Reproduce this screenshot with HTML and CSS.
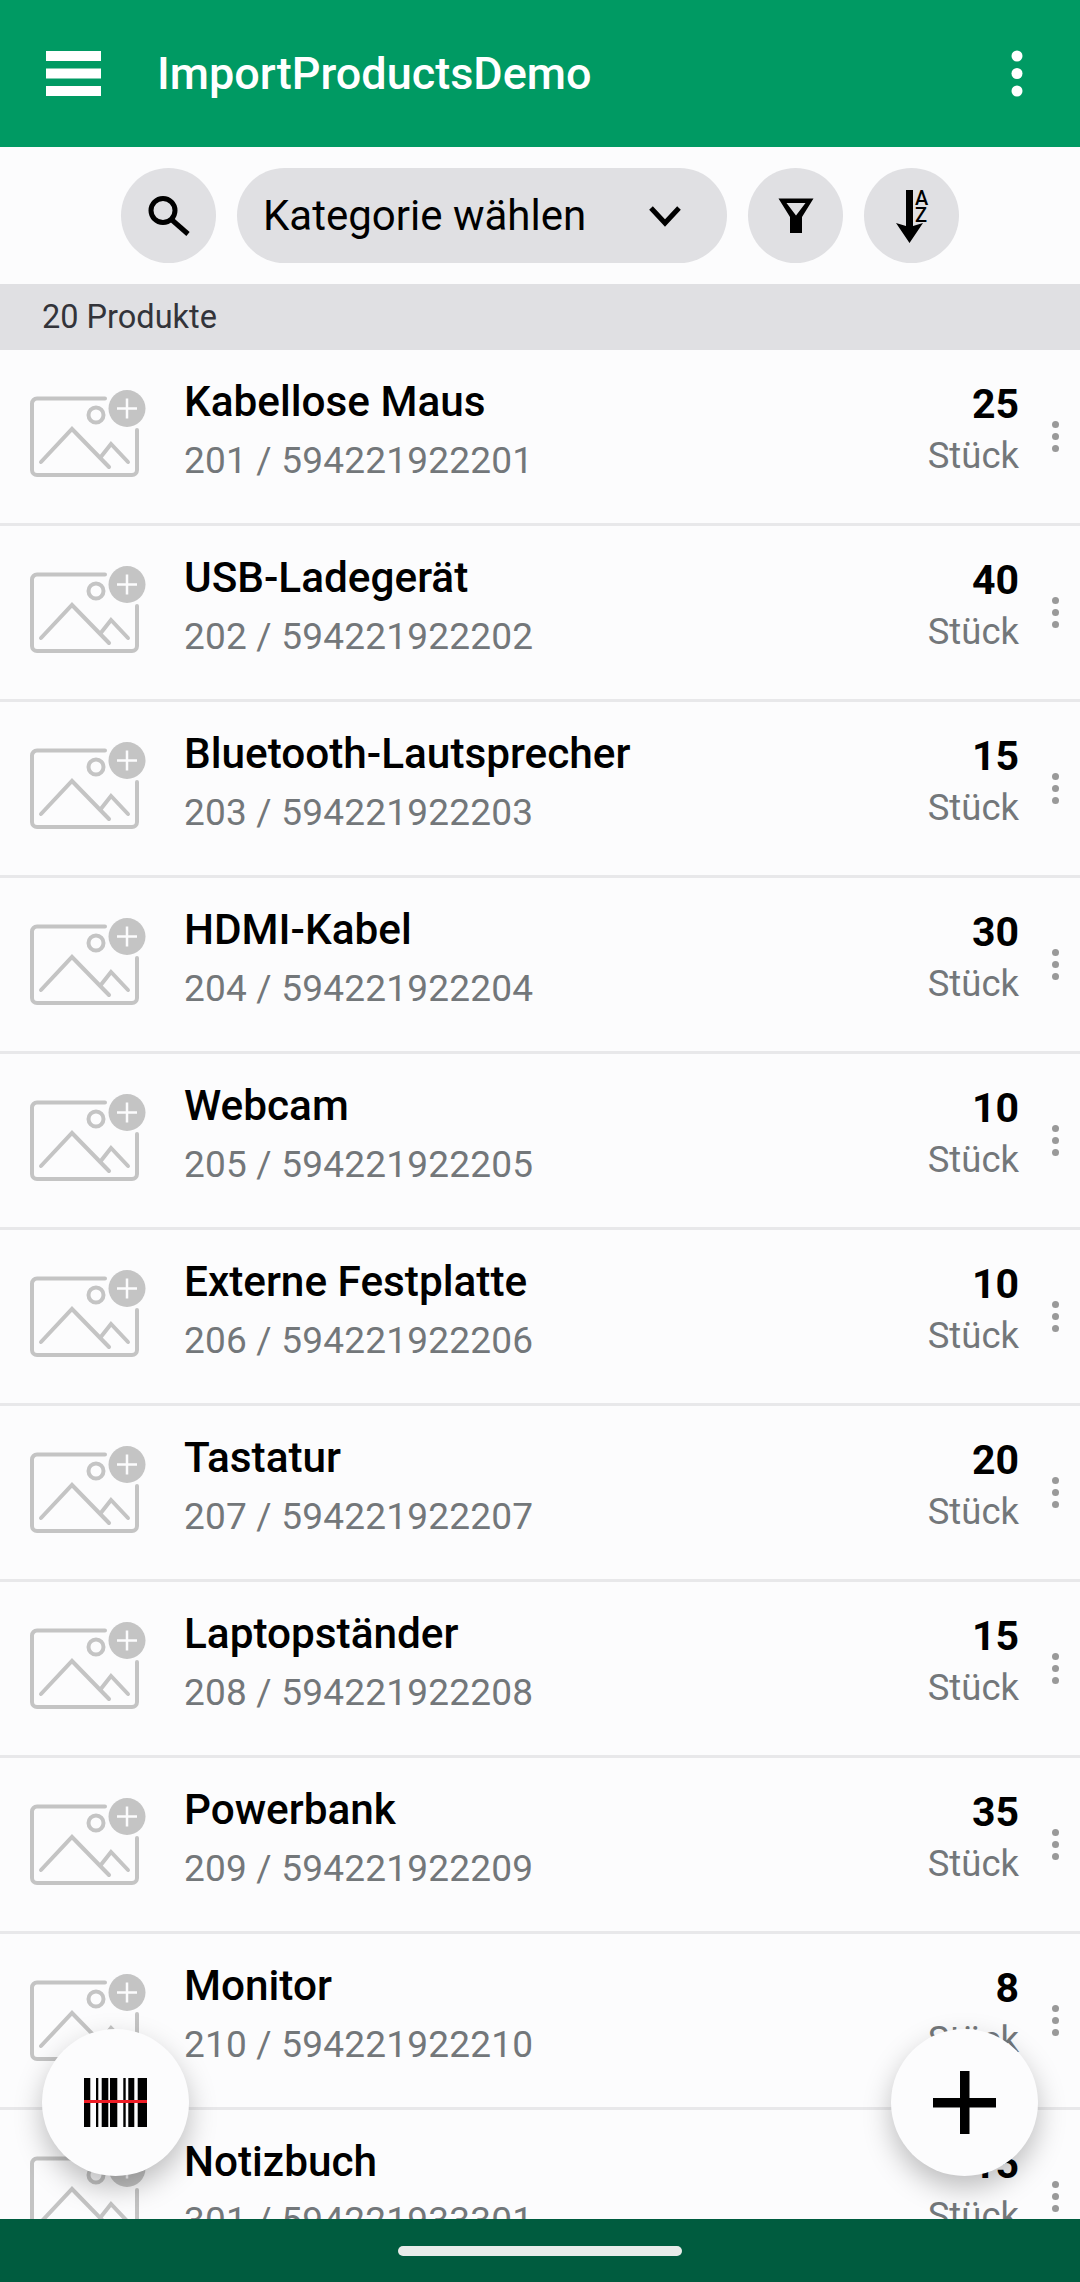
FILE: index.html
```html
<!DOCTYPE html>
<html lang="de">
<head>
    <meta charset="UTF-8">
    <title>ImportProductsDemo</title>
    <link rel="stylesheet" href="styles.css">
</head>
<body>
    <svg class="defs" width="0" height="0">
        <symbol id="photo" viewBox="0 0 120 100">
            <path d="M78 11.500H10a5 5 0 0 0-5 5v66.500a5 5 0 0 0 5 5h95a5 5 0 0 0 5-5V43" class="photo-line"/>
            <circle cx="69" cy="28" r="7.500" class="photo-line"/>
            <path d="M14 75L45 42L82 80M73 71L84 57L101 75" class="photo-line"/>
            <circle cx="100" cy="21.500" r="18.500" class="photo-badge"/>
            <path d="M100 11.500V31.500M90 21.500H110" class="photo-plus"/>
        </symbol>
    </svg>
    <header class="appbar">
        <svg class="menu-icon" viewBox="0 0 55 45"><path d="M0 0H55V10H0ZM0 17.500H55V27.500H0ZM0 35H55V45H0Z"/></svg>
        <div class="appbar-title">ImportProductsDemo</div>
        <svg class="more-icon" viewBox="0 0 12 47"><circle cx="6" cy="6" r="5.500"/><circle cx="6" cy="23.500" r="5.500"/><circle cx="6" cy="41" r="5.500"/></svg>
    </header>
    <div class="toolbar">
        <div class="round-btn">
            <svg width="44" height="44" viewBox="0 0 44 44"><circle cx="16" cy="16.500" r="12" class="tool-line"/><path d="M25 26L41 40" class="tool-line"/></svg>
        </div>
        <div class="select-btn">
            <span>Kategorie wählen</span>
            <svg width="34" height="22" viewBox="0 0 34 22"><path d="M3 3L17 18L31 3" class="tool-line"/></svg>
        </div>
        <div class="round-btn">
            <svg width="40" height="40" viewBox="0 0 40 40"><path d="M2.500 2.500H37.500L26 21V37H14V21ZM10.500 7L20 19.500L29.500 7Z" fill-rule="evenodd"/></svg>
        </div>
        <div class="round-btn">
            <svg width="40" height="60" viewBox="0 -2 40 60"><path d="M14 2H21V38L31 35L17.500 55L4 35L14 38Z"/><text x="23" y="17" class="sort-letter">A</text><text x="23" y="34" class="sort-letter">Z</text></svg>
        </div>
    </div>
    <div class="count-bar">20 Produkte</div>
    <main class="list">
        <div class="row">
            <svg class="photo"><use href="#photo"/></svg>
            <div class="info"><div class="name">Kabellose Maus</div><div class="sub">201 / 594221922201</div></div>
            <div class="stock"><div class="qty">25</div><div class="unit">Stück</div></div>
            <div class="dots"><i></i><i></i><i></i></div>
        </div>
        <div class="row">
            <svg class="photo"><use href="#photo"/></svg>
            <div class="info"><div class="name">USB-Ladegerät</div><div class="sub">202 / 594221922202</div></div>
            <div class="stock"><div class="qty">40</div><div class="unit">Stück</div></div>
            <div class="dots"><i></i><i></i><i></i></div>
        </div>
        <div class="row">
            <svg class="photo"><use href="#photo"/></svg>
            <div class="info"><div class="name">Bluetooth-Lautsprecher</div><div class="sub">203 / 594221922203</div></div>
            <div class="stock"><div class="qty">15</div><div class="unit">Stück</div></div>
            <div class="dots"><i></i><i></i><i></i></div>
        </div>
        <div class="row">
            <svg class="photo"><use href="#photo"/></svg>
            <div class="info"><div class="name">HDMI-Kabel</div><div class="sub">204 / 594221922204</div></div>
            <div class="stock"><div class="qty">30</div><div class="unit">Stück</div></div>
            <div class="dots"><i></i><i></i><i></i></div>
        </div>
        <div class="row">
            <svg class="photo"><use href="#photo"/></svg>
            <div class="info"><div class="name">Webcam</div><div class="sub">205 / 594221922205</div></div>
            <div class="stock"><div class="qty">10</div><div class="unit">Stück</div></div>
            <div class="dots"><i></i><i></i><i></i></div>
        </div>
        <div class="row">
            <svg class="photo"><use href="#photo"/></svg>
            <div class="info"><div class="name">Externe Festplatte</div><div class="sub">206 / 594221922206</div></div>
            <div class="stock"><div class="qty">10</div><div class="unit">Stück</div></div>
            <div class="dots"><i></i><i></i><i></i></div>
        </div>
        <div class="row">
            <svg class="photo"><use href="#photo"/></svg>
            <div class="info"><div class="name">Tastatur</div><div class="sub">207 / 594221922207</div></div>
            <div class="stock"><div class="qty">20</div><div class="unit">Stück</div></div>
            <div class="dots"><i></i><i></i><i></i></div>
        </div>
        <div class="row">
            <svg class="photo"><use href="#photo"/></svg>
            <div class="info"><div class="name">Laptopständer</div><div class="sub">208 / 594221922208</div></div>
            <div class="stock"><div class="qty">15</div><div class="unit">Stück</div></div>
            <div class="dots"><i></i><i></i><i></i></div>
        </div>
        <div class="row">
            <svg class="photo"><use href="#photo"/></svg>
            <div class="info"><div class="name">Powerbank</div><div class="sub">209 / 594221922209</div></div>
            <div class="stock"><div class="qty">35</div><div class="unit">Stück</div></div>
            <div class="dots"><i></i><i></i><i></i></div>
        </div>
        <div class="row">
            <svg class="photo"><use href="#photo"/></svg>
            <div class="info"><div class="name">Monitor</div><div class="sub">210 / 594221922210</div></div>
            <div class="stock"><div class="qty">8</div><div class="unit">Stück</div></div>
            <div class="dots"><i></i><i></i><i></i></div>
        </div>
        <div class="row">
            <svg class="photo"><use href="#photo"/></svg>
            <div class="info"><div class="name">Notizbuch</div><div class="sub">301 / 594221933301</div></div>
            <div class="stock"><div class="qty">15</div><div class="unit">Stück</div></div>
            <div class="dots"><i></i><i></i><i></i></div>
        </div>
        <div class="fab fab-scan">
            <svg width="63" height="49" viewBox="0 0 63 49">
                <path d="M0 0H6.300V49H0ZM12 0H14.300V49H12ZM17.700 0H24.300V49H17.700ZM26 0H33.300V49H26ZM39.300 0H41.700V49H39.300ZM44.300 0H50.300V49H44.300ZM53.700 0H63V49H53.700Z"/>
                <path d="M0 23.500H63" class="scan-line"/>
            </svg>
        </div>
        <div class="fab fab-add">
            <svg width="63" height="63" viewBox="0 0 63 63"><path d="M27 0H36.500V27H63V36.500H36.500V63H27V36.500H0V27H27Z"/></svg>
        </div>
    </main>
    <footer class="navbar"><div class="home-pill"></div></footer>
</body>
</html>
```
FILE: styles.css
```css
* {
    margin: 0;
    padding: 0;
    box-sizing: border-box;
}
html, body {
    height: 100%;
}
body {
    width: 1080px;
    height: 2282px;
    font-family: Roboto, "Liberation Sans", sans-serif;
    background-color: #fcfcfd;
    display: flex;
    flex-direction: column;
    overflow: hidden;
}
.defs {
    position: absolute;
}
.appbar {
    height: 147px;
    background-color: #009a63;
    color: #fff;
    display: flex;
    align-items: center;
    padding: 0 57px 0 46px;
    flex-shrink: 0;
}
.menu-icon {
    width: 55px;
    height: 45px;
    fill: #fff;
}
.appbar-title {
    font-size: 45px;
    font-weight: 500;
    margin-left: 56px;
    flex: 1;
}
.more-icon {
    width: 12px;
    height: 47px;
    fill: #fff;
}
.toolbar {
    height: 137px;
    display: flex;
    align-items: center;
    justify-content: center;
    gap: 21px;
    flex-shrink: 0;
}
.round-btn {
    width: 95px;
    height: 95px;
    border-radius: 50%;
    background-color: #e0e0e3;
    display: flex;
    align-items: center;
    justify-content: center;
}
.select-btn {
    width: 490px;
    height: 95px;
    border-radius: 48px;
    background-color: #e0e0e3;
    display: flex;
    align-items: center;
    justify-content: space-between;
    padding: 0 45px 0 26px;
    font-size: 42px;
    color: #000;
}
.tool-line {
    fill: none;
    stroke: #000;
    stroke-width: 5;
}
.sort-letter {
    font-size: 20px;
    font-weight: 500;
}
.count-bar {
    height: 66px;
    background-color: #e0e0e3;
    color: #33343a;
    font-size: 32.500px;
    line-height: 66px;
    padding-left: 42px;
    flex-shrink: 0;
}
.list {
    flex: 1;
    overflow: hidden;
    position: relative;
}
.row {
    height: 176px;
    border-bottom: 3px solid #e8e8ea;
    display: flex;
    align-items: center;
    padding: 0 7px 0 27px;
}
.photo {
    width: 120px;
    height: 100px;
    flex-shrink: 0;
}
.photo-line {
    fill: none;
    stroke: #c4c4c4;
    stroke-width: 4;
    stroke-linecap: round;
}
.photo-badge {
    fill: #c4c4c4;
}
.photo-plus {
    fill: none;
    stroke: #fcfcfd;
    stroke-width: 2.500;
}
.info {
    flex: 1;
    margin-left: 37px;
    padding-bottom: 13px;
}
.name {
    font-size: 42.300px;
    font-weight: 500;
    color: #000;
    line-height: 52px;
}
.sub {
    font-size: 37px;
    color: #73777a;
    line-height: 48px;
    margin-top: 9px;
    letter-spacing: 0.2px;
}
.stock {
    text-align: right;
    padding-bottom: 14px;
}
.qty {
    font-size: 41px;
    font-weight: 700;
    color: #000;
    line-height: 50px;
}
.unit {
    font-size: 36.500px;
    color: #73777a;
    line-height: 48px;
    margin-top: 3px;
}
.dots {
    width: 36px;
    margin-left: 18px;
    display: flex;
    flex-direction: column;
    align-items: center;
    gap: 5px;
}
.dots i {
    width: 7px;
    height: 7px;
    border-radius: 50%;
    background-color: #999;
}
.fab {
    position: absolute;
    top: 1679px;
    width: 147px;
    height: 147px;
    border-radius: 50%;
    background-color: #fcfcfd;
    box-shadow: 0 12px 28px rgba(0, 0, 0, .25);
    display: flex;
    align-items: center;
    justify-content: center;
}
.fab-scan {
    left: 42px;
}
.fab-add {
    left: 891px;
}
.scan-line {
    stroke: #ee1c25;
    stroke-width: 3;
}
.navbar {
    height: 63px;
    background-color: #005c3f;
    display: flex;
    align-items: center;
    justify-content: center;
    flex-shrink: 0;
}
.home-pill {
    width: 284px;
    height: 10px;
    border-radius: 5px;
    background-color: #e8ecea;
}
```
